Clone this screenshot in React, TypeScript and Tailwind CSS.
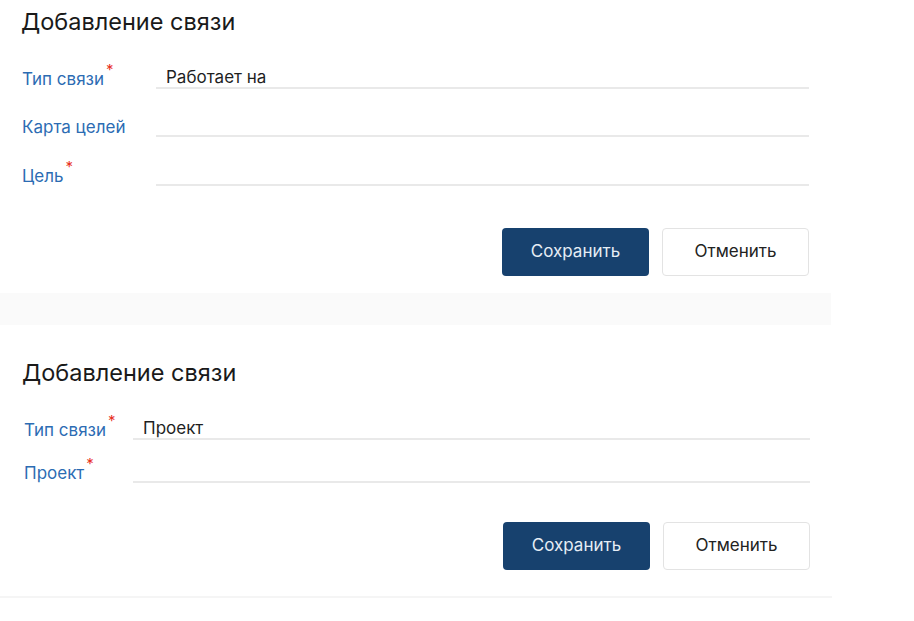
import React from 'react'

type Field = { label: string, required?: boolean, value?: string }

const font = { fontFamily: 'Inter, "Noto Sans", sans-serif' }

const Row = ({ field, labelW, className }: { field: Field, labelW: string, className: string }) => (
  <div className={`flex items-end ${className}`}>
    <div className={`${labelW} shrink-0 text-[17px] leading-5 text-[#2c6cb3]`}>
      {field.label}
      {field.required && (
        <span className="relative -top-[10px] ml-[2px] text-[15px] leading-none text-[#e8321f]">*</span>
      )}
    </div>
    <div className="flex-1 border-b-2 border-[#e9e9e9] pl-[10px] text-[17px] leading-5 text-[#1f1f1f]">
      {field.value || '\u00a0'}
    </div>
  </div>
)

const Buttons = ({ className }: { className: string }) => (
  <div className={`flex justify-end gap-[13px] ${className}`}>
    <button className="h-12 w-[147px] rounded-[4px] bg-[#17416e] text-[17px] text-[#e6edf5]">
      Сохранить
    </button>
    <button className="h-12 w-[147px] rounded-[4px] border border-[#e3e3e3] bg-white text-[17px] text-[#222]">
      Отменить
    </button>
  </div>
)

export default function App() {
  const first: Field[] = [
    { label: 'Тип связи', required: true, value: 'Работает на' },
    { label: 'Карта целей' },
    { label: 'Цель', required: true },
  ]
  const second: Field[] = [
    { label: 'Тип связи', required: true, value: 'Проект' },
    { label: 'Проект', required: true },
  ]

  return (
    <div className="min-h-screen w-[914px] bg-white" style={font}>
      <div className="w-[831px] pl-[21px] pr-[22px] pt-[6px] pb-[17px]">
        <h2 className="text-[23.5px] leading-8 text-[#1a1a1a]">Добавление связи</h2>
        <Row field={first[0]} labelW="w-[135px] pl-[1px]" className="mt-[29px]" />
        <Row field={first[1]} labelW="w-[135px] pl-[1px]" className="mt-[26px]" />
        <Row field={first[2]} labelW="w-[135px] pl-[1px]" className="mt-[27px]" />
        <Buttons className="mt-[42px]" />
      </div>
      <div className="h-8 w-[831px] bg-[#fafafa]"></div>
      <div className="w-[832px] border-b-2 border-[#f5f5f5] pl-[22px] pr-[22px] pt-[32px] pb-[26px]">
        <h2 className="text-[23.5px] leading-8 text-[#1a1a1a]">Добавление связи</h2>
        <Row field={second[0]} labelW="w-[111px] pl-[2px]" className="mt-[29px]" />
        <Row field={second[1]} labelW="w-[111px] pl-[2px]" className="mt-[21px]" />
        <Buttons className="mt-[39px]" />
      </div>
    </div>
  )
}
